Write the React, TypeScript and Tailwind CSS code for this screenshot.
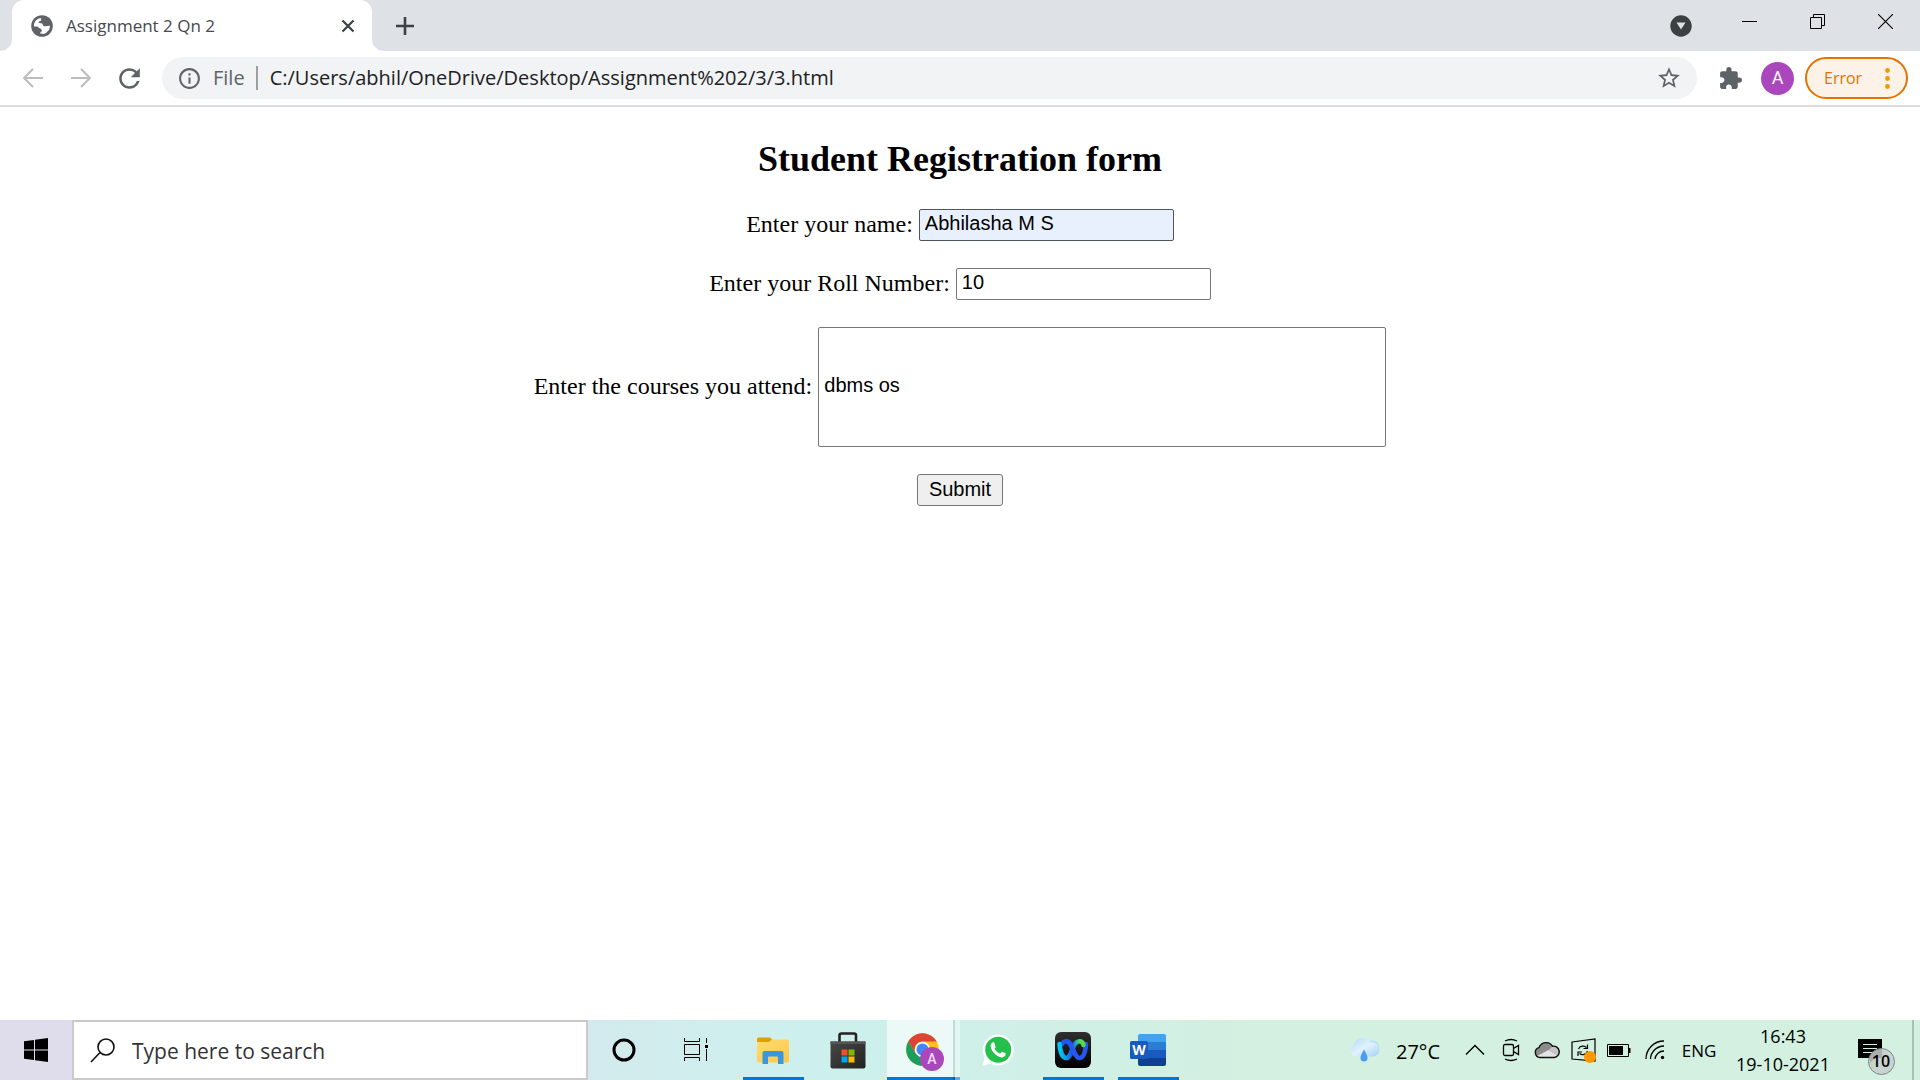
import type { ReactNode } from "react";
import { MdExtension, MdInfoOutline, MdRefresh, MdStarBorder } from "react-icons/md";

function GlobeIcon() {
  return (
    <svg width="22" height="22" viewBox="0 0 22 22" aria-hidden="true">
      <circle cx="11" cy="11" r="10.8" fill="#5f6368" />
      <path
        d="M3 9.5C3.500 6 6.500 3.200 10.500 3C9.500 4 9.700 4.700 10.500 5.300C9.500 6.300 8 6.300 7.500 7.200C7.400 8.300 8.800 8 10.500 8.200C12 8.500 11.600 10.500 13 11.200C14.700 11.700 17 10.800 19 10.800C19 14.500 16.500 18 12.500 18.900C10.500 18.900 9.500 18.600 9 18.300C9.200 16.800 10.800 16.800 10.900 15.400C10.900 13.600 8.500 13.800 7.600 12.400C7 11 5 11.500 3 11.400Z"
        fill="#fff"
      />
    </svg>
  );
}

function Arrow({ flip = false }: { flip?: boolean }) {
  return (
    <svg
      width="22"
      height="22"
      viewBox="0 0 22 22"
      fill="none"
      stroke="#babcbe"
      strokeWidth="2"
      className={flip ? "rotate-180" : ""}
      aria-hidden="true"
    >
      <path d="M21 11H2.500M11 2L2 11L11 20" />
    </svg>
  );
}

function BrowserTabs() {
  return (
    <header className="flex h-[51px] items-stretch bg-[#dee1e6]">
      <div className="w-3 bg-white">
        <div className="h-full rounded-br-xl bg-[#dee1e6]" />
      </div>
      <div className="flex w-[360px] items-center rounded-t-xl bg-white pl-[19px] pr-3">
        <GlobeIcon />
        <h1 className="ml-[13px] flex-1 text-[17px] leading-6 text-[#45494d]">Assignment 2 Qn 2</h1>
        <button aria-label="Close tab" className="flex size-6 items-center justify-center">
          <svg width="14" height="14" viewBox="0 0 14 14" stroke="#3c4043" strokeWidth="2.200" aria-hidden="true">
            <path d="M1.500 1.500L12.500 12.500M12.500 1.500L1.500 12.500" />
          </svg>
        </button>
      </div>
      <div className="w-3 bg-white">
        <div className="h-full rounded-bl-xl bg-[#dee1e6]" />
      </div>
      <button aria-label="New tab" className="flex w-[42px] items-center justify-center">
        <svg width="18" height="18" viewBox="0 0 18 18" stroke="#3c4043" strokeWidth="2.600" aria-hidden="true">
          <path d="M0 9H18M9 0V18" />
        </svg>
      </button>
      <div className="flex-1" />
      <button aria-label="Search tabs" className="mr-[10px] flex w-12 items-center justify-center">
        <svg width="22" height="22" viewBox="0 0 22 22" aria-hidden="true">
          <circle cx="11" cy="11" r="10.700" fill="#3c4043" />
          <path d="M6.500 7.500H15.500L11 14.500Z" fill="#dee1e6" />
        </svg>
      </button>
      <div className="flex h-[43px]">
        <button aria-label="Minimize" className="flex w-[68px] items-center justify-center">
          <svg width="15" height="15" viewBox="0 0 15 15" stroke="#000" aria-hidden="true">
            <path d="M0 7.500H15" />
          </svg>
        </button>
        <button aria-label="Restore" className="flex w-[68px] items-center justify-center">
          <svg width="15" height="15" viewBox="0 0 15 15" fill="none" stroke="#000" aria-hidden="true">
            <path d="M0.500 3.500H11.500V14.500H0.500ZM3.500 3.500V0.500H14.500V11.500H11.500" />
          </svg>
        </button>
        <button aria-label="Close window" className="flex w-[69px] items-center justify-center">
          <svg width="15" height="15" viewBox="0 0 15 15" stroke="#000" strokeWidth="1.100" aria-hidden="true">
            <path d="M0 0L15 15M15 0L0 15" />
          </svg>
        </button>
      </div>
    </header>
  );
}

function Toolbar() {
  return (
    <nav aria-label="Browser toolbar" className="flex h-14 items-center border-b-2 border-[#dadcdf] bg-white pl-[9px] pr-3">
      <button aria-label="Back" className="flex w-12 justify-center">
        <Arrow />
      </button>
      <button aria-label="Forward" className="flex w-12 justify-center">
        <Arrow flip />
      </button>
      <button aria-label="Reload" className="flex w-12 justify-center">
        <MdRefresh size={31} color="#5f6368" />
      </button>
      <div className="ml-[9px] flex h-[42px] flex-1 items-center rounded-full bg-[#f1f3f4] pl-[15px] pr-[15px]">
        <MdInfoOutline size={25} color="#5f6368" />
        <span className="ml-[11px] text-xl leading-7 text-[#5f6368]">File</span>
        <span className="ml-[11px] h-6 w-0.5 bg-[#9aa0a6]" />
        <input
          aria-label="Address"
          defaultValue="C:/Users/abhil/OneDrive/Desktop/Assignment%202/3/3.html"
          className="ml-3 min-w-0 flex-1 bg-transparent text-xl leading-7 text-[#202124] outline-none"
        />
        <button aria-label="Bookmark this page">
          <MdStarBorder size={26} color="#5f6368" />
        </button>
      </div>
      <button aria-label="Extensions" className="ml-5 flex w-[26px] justify-center">
        <MdExtension size={25} color="#5f6368" />
      </button>
      <button aria-label="Profile" className="ml-[18px] flex size-[33px] items-center justify-center rounded-full bg-[#ab47bc] font-[Roboto] text-lg text-white">
        A
      </button>
      <button className="ml-[11px] flex h-[42px] w-[103px] items-center justify-between rounded-full border-2 border-[#e37400] bg-[#fcf2e8] pl-[17px] pr-4 text-base text-[#e37400]">
        Error
        <svg width="5" height="21" viewBox="0 0 5 21" fill="#f29900" aria-hidden="true">
          <circle cx="2.500" cy="2.500" r="2.400" />
          <circle cx="2.500" cy="10.500" r="2.400" />
          <circle cx="2.500" cy="18.500" r="2.400" />
        </svg>
      </button>
    </nav>
  );
}

const fieldClass =
  "rounded-[2px] border px-[5px] pb-[3px] font-['Liberation_Sans',Arial,sans-serif] text-xl leading-6 text-black outline-none";

function RegistrationForm() {
  return (
    <main className="flex-1 bg-white font-['Liberation_Serif','Times_New_Roman',serif] text-2xl text-black">
      <h2 className="pt-[31px] text-center text-4xl leading-[42px] font-bold">Student Registration form</h2>
      <form className="mt-[29px] flex flex-col items-center gap-[27px] leading-7" onSubmit={(e) => e.preventDefault()}>
        <div className="flex items-center gap-[6px]">
          <label htmlFor="name" className="pb-0.5">Enter your name:</label>
          <input id="name" defaultValue="Abhilasha M S" className={`${fieldClass} h-8 w-[255px] border-[#50545c] bg-[#e8f0fe]`} />
        </div>
        <div className="flex items-center gap-[6px]">
          <label htmlFor="roll" className="pb-0.5">Enter your Roll Number:</label>
          <input id="roll" defaultValue="10" className={`${fieldClass} h-8 w-[255px] border-[#767676] bg-white`} />
        </div>
        <div className="flex items-center gap-[6px]">
          <label htmlFor="courses" className="pb-0.5">Enter the courses you attend:</label>
          <input id="courses" defaultValue="dbms os" className={`${fieldClass} h-[120px] w-[568px] border-[#767676] bg-white`} />
        </div>
        <button
          type="submit"
          className="h-8 w-[86px] rounded-[3px] border border-[#767676] bg-[#efefef] pb-[3px] font-['Liberation_Sans',Arial,sans-serif] text-xl leading-6"
        >
          Submit
        </button>
      </form>
    </main>
  );
}

function ExplorerIcon() {
  return (
    <svg width="32" height="27" viewBox="0 0 32 27" aria-hidden="true">
      <defs>
        <linearGradient id="folder" x1="0" y1="0" x2="1" y2="1">
          <stop offset="0" stopColor="#ffdc73" />
          <stop offset="1" stopColor="#fcc74a" />
        </linearGradient>
      </defs>
      <path d="M0 2Q0 0.500 1.500 0.500H13L15.500 3L13 6H0Z" fill="#e0a100" />
      <path d="M0 5H12L15 2.500H30.500Q32 2.500 32 4V24Q32 25.500 30.500 25.500H1.500Q0 25.500 0 24Z" fill="url(#folder)" />
      <path d="M5.500 27V16Q5.500 14 7.500 14H24.500Q26.500 14 26.500 16V27H21V20.500Q21 19.500 20 19.500H12Q11 19.500 11 20.500V27Z" fill="#3a96dd" />
    </svg>
  );
}

function StoreIcon() {
  return (
    <svg width="36" height="37" viewBox="0 0 36 37" aria-hidden="true">
      <defs>
        <linearGradient id="bag" x1="0" y1="0" x2="1" y2="1">
          <stop offset="0" stopColor="#484848" />
          <stop offset="1" stopColor="#222" />
        </linearGradient>
      </defs>
      <path d="M9.500 12V3.500Q9.500 1.500 11.500 1.500H24Q26 1.500 26 3.500V12" fill="none" stroke="#222" strokeWidth="2.600" />
      <path d="M0.500 9.500H35.500V34.500Q35.500 36.500 33.500 36.500H2.500Q0.500 36.500 0.500 34.500Z" fill="url(#bag)" />
      <path d="M0.500 9.500H35.500V12H0.500Z" fill="#555" />
      <path d="M11.500 17.500H17.500V23.500H11.500Z" fill="#f25022" />
      <path d="M18.500 17.500H24.500V23.500H18.500Z" fill="#7fba00" />
      <path d="M11.500 24.500H17.500V30.500H11.500Z" fill="#00a4ef" />
      <path d="M18.500 24.500H24.500V30.500H18.500Z" fill="#ffb900" />
    </svg>
  );
}

function ChromeIcon() {
  return (
    <svg width="38" height="38" viewBox="0 0 38 38" aria-hidden="true">
      <circle cx="16.500" cy="16.500" r="16.300" fill="#fbc116" />
      <path d="M2.400 8.350A16.300 16.300 0 0 0 16.500 32.800L23.500 20.500L16.500 24.500L9.600 20.500Z" fill="#1a9e5c" />
      <path d="M2.400 8.350A16.300 16.300 0 0 1 30.600 8.600H16.500A8 8 0 0 0 9.300 20Z" fill="#db4437" />
      <circle cx="16.500" cy="16.500" r="7.700" fill="#fff" />
      <circle cx="16.500" cy="16.500" r="6" fill="#4285f4" />
      <circle cx="26" cy="26" r="12" fill="#ab47bc" />
      <text x="26" y="31" textAnchor="middle" fontFamily="Roboto" fontSize="14" fontWeight="500" fill="#f3def6">
        A
      </text>
    </svg>
  );
}

function WhatsAppIcon() {
  return (
    <svg width="32" height="32" viewBox="0 0 32 32" aria-hidden="true">
      <path d="M0.500 31.700L2.700 23.700A15.500 15.500 0 1 1 8.500 29.500Z" fill="#fff" />
      <circle cx="16.200" cy="15.800" r="13" fill="#25bf4c" />
      <path
        d="M11 8.300C9 9 8.200 11 8.800 13.200C10.200 18.300 14.800 22.800 19.800 23.400C22 23.500 23.700 22 23.800 19.800C23.800 19.200 21.300 18.200 20.300 17.800C19.300 17.600 18.800 19.800 17.900 19.600C15.700 18.900 13.800 17.300 12.700 15.100C12.400 14.300 13.700 13.600 13.600 12.700C13.300 11.700 12.700 9.700 12.300 8.800C12.100 8.300 11.600 8.200 11 8.300Z"
        fill="#fff"
      />
    </svg>
  );
}

function WebexIcon() {
  return (
    <svg width="36" height="36" viewBox="0 0 36 36" aria-hidden="true">
      <defs>
        <linearGradient id="wxTile" x1="0" y1="0" x2="0" y2="1">
          <stop offset="0" stopColor="#303030" />
          <stop offset="1" stopColor="#000" />
        </linearGradient>
        <linearGradient id="wxLeft" x1="0" y1="0" x2="1" y2="0">
          <stop offset="0" stopColor="#07c5f4" />
          <stop offset="0.500" stopColor="#0aa0e8" />
          <stop offset="1" stopColor="#2450e8" />
        </linearGradient>
        <linearGradient id="wxRight" x1="0" y1="0" x2="1" y2="0">
          <stop offset="0" stopColor="#2350e6" />
          <stop offset="0.350" stopColor="#22a6c8" />
          <stop offset="0.650" stopColor="#56d94f" />
        </linearGradient>
      </defs>
      <rect width="36" height="36" rx="6" fill="url(#wxTile)" />
      <g fill="none" strokeWidth="4.600" strokeLinecap="round">
        <path d="M7 12C8 10 9.500 9.300 11.500 9.300C17.500 9.300 19 26 24.500 26C29 26 30.500 18 31 12" stroke="#2656f0" />
        <path d="M4.500 12C5 18 7 26 11.500 26C14 26 15.500 22 17 18" stroke="url(#wxLeft)" />
        <path d="M17 18C18.500 13 20.500 9.300 24.500 9.300C26.500 9.300 28 10.500 28.500 13" stroke="url(#wxRight)" />
        <path d="M11 9.300C15.500 9 17 17 19 21.500" stroke="#2656f0" />
      </g>
    </svg>
  );
}

function WordIcon() {
  return (
    <svg width="36" height="34" viewBox="0 0 36 34" aria-hidden="true">
      <defs>
        <clipPath id="wordPage">
          <rect x="8" y="1" width="28" height="32" rx="2" />
        </clipPath>
      </defs>
      <g clipPath="url(#wordPage)">
        <path d="M8 1H36V9H8Z" fill="#41a5ee" />
        <path d="M8 9H36V17H8Z" fill="#2b7cd3" />
        <path d="M8 17H36V25H8Z" fill="#185abd" />
        <path d="M8 25H36V33H8Z" fill="#103f91" />
      </g>
      <rect x="0" y="8" width="18" height="18" rx="1.500" fill="#185abd" />
      <text x="9" y="22" textAnchor="middle" fontFamily="Open Sans" fontSize="14" fontWeight="700" fill="#fff">
        W
      </text>
    </svg>
  );
}

function TaskButton({ label, open = false, active = false, children }: { label: string; open?: boolean; active?: boolean; children: ReactNode }) {
  if (active) {
    return (
      <button aria-label={label} className="flex w-[75px] items-stretch pl-px pr-px">
        <span className="flex flex-1 items-center justify-center border-b-[3px] border-[#0078d7] bg-white/60 pl-[9px] pt-[7px]">{children}</span>
        <span className="w-0.5 border-b-[3px] border-[#0067b9] bg-[#bfdcd9]" />
        <span className="w-[5px] border-b-[3px] border-[#62a9e6] bg-white/40" />
      </button>
    );
  }
  return (
    <button
      aria-label={label}
      className={`mx-[7px] flex w-[61px] items-center justify-center border-b-[3px] pr-0.5 pt-[3px] ${open ? "border-[#0078d7]" : "border-transparent"}`}
    >
      {children}
    </button>
  );
}

function TrayButton({ label, children }: { label: string; children: ReactNode }) {
  return (
    <button aria-label={label} className="flex w-9 items-center justify-center">
      {children}
    </button>
  );
}

function Tray() {
  return (
    <div className="flex items-stretch">
      <button className="flex items-center gap-4 pr-[17px] text-xl">
        <svg width="32" height="26" viewBox="0 0 32 26" aria-hidden="true">
          <defs>
            <linearGradient id="cloud" x1="0" y1="0" x2="1" y2="1">
              <stop offset="0" stopColor="#aedcfb" />
              <stop offset="0.500" stopColor="#e2f2fe" />
              <stop offset="1" stopColor="#a4d0f6" />
            </linearGradient>
          </defs>
          <circle cx="24" cy="11" r="7.500" fill="#b7dcf8" />
          <path d="M7.500 19.500A6.500 6.500 0 0 1 6 7.500A9 9 0 0 1 22.500 5.500A7 7 0 0 1 26 19.500Z" fill="url(#cloud)" />
          <path d="M16 12.500C18 16 19.500 18.500 19.500 21A3.500 3.500 0 0 1 12.500 21C12.500 18.500 14 16 16 12.500Z" fill="#4a9df0" />
        </svg>
        <span className="pt-1">27°C</span>
      </button>
      <TrayButton label="Show hidden icons">
        <svg width="20" height="12" viewBox="0 0 20 12" fill="none" stroke="#000" strokeWidth="1.400" aria-hidden="true">
          <path d="M1 10.500L10 1.500L19 10.500" />
        </svg>
      </TrayButton>
      <TrayButton label="Meet now">
        <svg width="18" height="24" viewBox="0 0 18 24" fill="none" stroke="#000" strokeWidth="1.300" aria-hidden="true">
          <rect x="1.500" y="6.500" width="10" height="11" rx="1.500" />
          <path d="M11.500 10.500L16.500 7.500V16.500L11.500 13.500M3 3Q9 0 15 3M3 21Q9 24 15 21" />
        </svg>
      </TrayButton>
      <TrayButton label="OneDrive">
        <svg width="26" height="18" viewBox="0 0 26 18" aria-hidden="true">
          <path d="M6 16.500A5 5 0 0 1 5 6.700A7.500 7.500 0 0 1 18.500 5.200A5.700 5.700 0 0 1 20.500 16.500Z" fill="#8c8c8c" />
          <path d="M3 15L14.500 9L23.500 14.500Q22 16.500 20.500 16.500H6Q4 16.500 3 15Z" fill="#e3e3e3" />
          <path d="M14.500 9L18.500 5.500Q24 5 25 11L23.500 14.500Z" fill="#c5c5c5" />
          <path d="M6 16.500A5 5 0 0 1 5 6.700A7.500 7.500 0 0 1 18.500 5.200A5.700 5.700 0 0 1 20.500 16.500Z" fill="none" stroke="#111" strokeWidth="1.400" />
        </svg>
      </TrayButton>
      <TrayButton label="Windows Update">
        <svg width="25" height="25" viewBox="0 0 25 25" fill="none" stroke="#000" strokeWidth="1.200" aria-hidden="true">
          <path d="M1 4L24 1V23L1 21Z" />
          <path d="M7.500 11A5 5 0 0 1 15.500 9.500M16.500 6.500V10.500H12.500M16.500 13A5 5 0 0 1 8.500 15.500M7 18V14H11" />
          <circle cx="19" cy="19" r="6" fill="#ff9800" stroke="none" />
        </svg>
      </TrayButton>
      <TrayButton label="Battery">
        <svg width="24" height="13" viewBox="0 0 24 13" aria-hidden="true">
          <path d="M0.500 0.500H21.500V12.500H0.500Z" fill="none" stroke="#000" />
          <path d="M2 2H16V11H2ZM22 4H23.500V9H22Z" />
        </svg>
      </TrayButton>
      <TrayButton label="Network">
        <svg width="20" height="20" viewBox="0 0 20 20" fill="none" stroke="#000" strokeWidth="1.300" aria-hidden="true">
          <path d="M1 19A18 18 0 0 1 19 1M5.500 19A13.500 13.500 0 0 1 19 6M10 19A9 9 0 0 1 19 11" />
          <circle cx="17.500" cy="17.500" r="1.700" fill="#000" stroke="none" />
        </svg>
      </TrayButton>
      <button className="flex w-[52px] items-center justify-center pt-0.5 text-[17px]">ENG</button>
      <button className="flex w-[116px] flex-col items-center justify-center text-lg leading-7">
        <time>16:43</time>
        <time>19-10-2021</time>
      </button>
      <button aria-label="Notifications" className="flex w-[71px] items-center justify-center pt-3">
        <svg width="38" height="38" viewBox="0 0 38 38" aria-hidden="true">
          <path d="M0 2H24V21H17L12 26V21H0Z" />
          <path d="M5 7.500H19M5 11.500H19M5 15.500H15" stroke="#d3f0e0" strokeWidth="1.200" />
          <circle cx="23.500" cy="24.500" r="13" fill="#c6cecb" fillOpacity="0.850" stroke="#808a85" />
          <text x="23" y="30" textAnchor="middle" fontFamily="Open Sans" fontSize="16" fontWeight="600">
            10
          </text>
        </svg>
      </button>
      <button aria-label="Show desktop" className="w-2 border-l-2 border-[#a9c0b3]" />
    </div>
  );
}

function Taskbar() {
  return (
    <footer className="flex h-[60px] items-stretch bg-linear-to-r from-[#dfddec] from-4% via-[#cdf0ee] via-42% to-[#d3f0e0] to-66% text-black">
      <button aria-label="Start" className="flex w-[72px] items-center justify-center">
        <svg width="24" height="24" viewBox="0 0 24 24" aria-hidden="true">
          <path d="M0 3.300L10 2V11.500H0ZM11 1.800L24 0V11.500H11ZM0 12.500H10V22L0 20.700ZM11 12.500H24V24L11 22.200Z" />
        </svg>
      </button>
      <label className="flex w-[516px] items-center border-2 border-[#cacaca] bg-white pl-4">
        <svg width="25" height="25" viewBox="0 0 25 25" fill="none" stroke="#111" strokeWidth="1.600" aria-hidden="true">
          <circle cx="16" cy="9" r="8" />
          <path d="M10 14.500L1 24" />
        </svg>
        <input
          aria-label="Search"
          placeholder="Type here to search"
          className="ml-[17px] min-w-0 flex-1 bg-transparent pt-1 text-[21px] placeholder:text-[#333] outline-none"
        />
      </label>
      <button aria-label="Cortana" className="flex w-[72px] items-center justify-center">
        <svg width="24" height="24" viewBox="0 0 24 24" aria-hidden="true">
          <circle cx="12" cy="12" r="10" fill="none" stroke="#000" strokeWidth="3" />
        </svg>
      </button>
      <button aria-label="Task view" className="mr-1 flex w-[72px] items-center justify-center">
        <svg width="24" height="24" viewBox="0 0 24 24" fill="none" stroke="#000" aria-hidden="true">
          <path d="M0.500 0V3.500H15.500V0M0.500 6.500H15.500V16.500H0.500ZM0.500 23V19.500H15.500V23M22.500 0V5M22.500 11V23" />
          <path d="M21 7H24V10H21Z" fill="#000" stroke="none" />
        </svg>
      </button>
      <TaskButton label="File Explorer" open>
        <ExplorerIcon />
      </TaskButton>
      <TaskButton label="Microsoft Store">
        <StoreIcon />
      </TaskButton>
      <TaskButton label="Google Chrome" active>
        <ChromeIcon />
      </TaskButton>
      <TaskButton label="WhatsApp">
        <WhatsAppIcon />
      </TaskButton>
      <TaskButton label="Webex" open>
        <WebexIcon />
      </TaskButton>
      <TaskButton label="Word" open>
        <WordIcon />
      </TaskButton>
      <div className="flex-1" />
      <Tray />
    </footer>
  );
}

export default function App() {
  return (
    <div className="flex min-h-screen flex-col bg-white font-['Open_Sans','Noto_Sans',sans-serif]">
      <BrowserTabs />
      <Toolbar />
      <RegistrationForm />
      <Taskbar />
    </div>
  );
}
